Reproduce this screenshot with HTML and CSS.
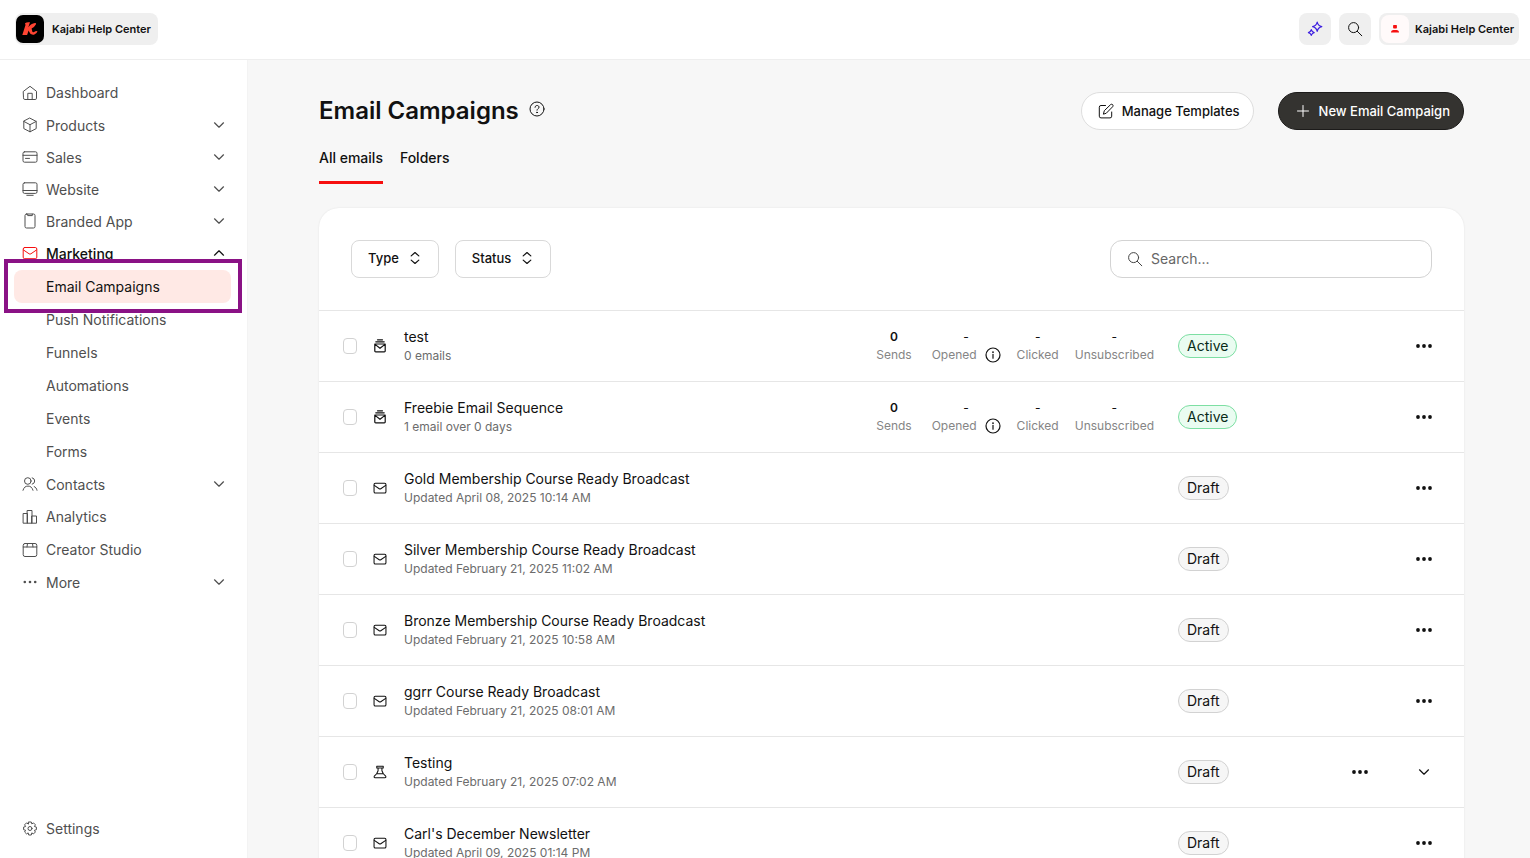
FILE: index.html
```html
<!DOCTYPE html>
<html lang="en">
<head>
<meta charset="utf-8">
<meta name="viewport" content="width=device-width, initial-scale=1">
<title>Email Campaigns</title>
<link rel="stylesheet" href="styles.css">
</head>
<body>
<svg class="sprite" aria-hidden="true">
  <symbol id="home" viewBox="0 0 16 16"><path d="M1.500 6.300 8 1.300l6.500 5v6.900a1.300 1.300 0 0 1-1.300 1.300H2.800a1.300 1.300 0 0 1-1.300-1.300zM5.800 14.500V8.300h4.400v6.200"/></symbol>
  <symbol id="cube" viewBox="0 0 16 16"><path d="M8 1.200 14.200 4.400v7.200L8 14.800 1.800 11.600V4.400zM1.800 4.400 8 7.700l6.200-3.300M8 7.700v7.100"/></symbol>
  <symbol id="card" viewBox="0 0 16 16"><rect x="1" y="2.800" width="14" height="10.400" rx="1.500"/><path d="M1 6.300h14M3.500 9.400h4"/></symbol>
  <symbol id="monitor" viewBox="0 0 16 16"><rect x="1" y="1.800" width="14" height="10.600" rx="1.500"/><path d="M1 9.500h14M4.800 14.300h6.400"/></symbol>
  <symbol id="phone" viewBox="0 0 16 16"><rect x="3" y="1" width="10" height="14" rx="1.500"/><path d="M5.700 1.200v1.400h4.600V1.200"/></symbol>
  <symbol id="mail" viewBox="0 0 16 16"><rect x="1.200" y="2.500" width="13.600" height="11.200" rx="1.500"/><path d="m1.500 5 5.600 3.800q.9.600 1.800 0L14.500 5"/></symbol>
  <symbol id="people" viewBox="0 0 16 16"><circle cx="5.800" cy="5" r="3.300"/><path d="M1 14.300c.8-3 2.600-4.200 5-4.200s4.200 1.200 5 4.200M10.200 1.800a3.300 3.300 0 0 1 0 6.400M12.200 10.600c1.500.6 2.400 1.800 2.800 3.700"/></symbol>
  <symbol id="bars" viewBox="0 0 16 16"><path d="M1.500 4.500h4v9.700h-4zM5.500 1.500h4.500v12.700H5.500zM10 7h4.500v7.200H10z"/></symbol>
  <symbol id="studio" viewBox="0 0 16 16"><rect x="1.200" y="1.500" width="13.600" height="13" rx="1.800"/><path d="M1.200 5h13.600M5.500 1.500 5 5M10.500 1.500l.5 3.500"/></symbol>
  <symbol id="dots" viewBox="0 0 16 16"><g fill="currentColor" stroke="none"><circle cx="2.800" cy="8" r="1.300"/><circle cx="8" cy="8" r="1.300"/><circle cx="13.200" cy="8" r="1.300"/></g></symbol>
  <symbol id="menu" viewBox="0 0 16 16"><g fill="currentColor" stroke="none"><circle cx="2" cy="8" r="1.900"/><circle cx="8" cy="8" r="1.900"/><circle cx="14" cy="8" r="1.900"/></g></symbol>
  <symbol id="gear" viewBox="0 0 16 16"><path d="m6.700 1h2.600l.5 1.900 1.700-1 1.900 1.900-1 1.700 2 .6v2.600l-2 .6 1 1.700-1.900 1.900-1.700-1-.5 2.100H6.700l-.5-2.100-1.700 1-1.900-1.900 1-1.700-2-.6V6.100l2-.6-1-1.700 1.900-1.900 1.700 1z"/><circle cx="8" cy="7.500" r="2"/></symbol>
  <symbol id="down" viewBox="0 0 12 12"><path d="m1.500 3.800 4.500 4.400 4.500-4.400"/></symbol>
  <symbol id="up" viewBox="0 0 12 12"><path d="m1.500 8.200 4.500-4.400 4.500 4.400"/></symbol>
  <symbol id="sort" viewBox="0 0 12 12"><path d="M2.200 3.900 6 .5l3.800 3.400M2.200 8.100 6 11.500l3.800-3.400"/></symbol>
  <symbol id="search" viewBox="0 0 16 16"><circle cx="6.600" cy="6.600" r="5"/><path d="m10.300 10.300 4.500 4.500"/></symbol>
  <symbol id="sparkle" viewBox="0 0 16 16"><path d="M10.200 1.200q.8 3.600 4.600 4.500-3.800.9-4.600 4.600Q9.400 6.600 5.600 5.700q3.800-.9 4.600-4.500zM4.300 8.700q.5 2.300 2.900 2.900-2.400.5-2.900 2.900-.5-2.400-2.900-2.900 2.400-.6 2.900-2.900z"/></symbol>
  <symbol id="help" viewBox="0 0 16 16"><circle cx="8" cy="8" r="7"/><path d="M6 6.300c0-2.500 4-2.400 4-.1C10 7.700 8 7.600 8 9.200"/><circle cx="8" cy="11.400" r=".4" fill="currentColor"/></symbol>
  <symbol id="info" viewBox="0 0 16 16"><circle cx="8" cy="8" r="7"/><path d="M8 7.400v3.800"/><circle cx="8" cy="5.200" r=".3" fill="currentColor"/></symbol>
  <symbol id="edit" viewBox="0 0 16 16"><path d="M7.500 2.500H3A1.700 1.700 0 0 0 1.300 4.200v9A1.700 1.700 0 0 0 3 14.900h9a1.700 1.700 0 0 0 1.700-1.700V9M5.500 10.800l.8-3.100 6.300-6.100c1.400-1.200 3.300.6 2.100 2.100L8.500 10z"/></symbol>
  <symbol id="plus" viewBox="0 0 16 16"><path d="M8 2.500v11M2.500 8h11"/></symbol>
  <symbol id="stack" viewBox="0 0 14 14"><path d="M4.500.8h5M2.800 2.800h8.400M1.800 5h10.400v6.900a.9.900 0 0 1-.9.900H2.700a.9.900 0 0 1-.9-.9zM2 5.400l5 3.900 5-3.900"/></symbol>
  <symbol id="flask" viewBox="0 0 16 16"><path d="M4.300 1.500h7.400v2H4.300zM5.800 3.500v3L4.200 10M10.200 3.500v3L11.800 10M4.200 10h7.600l2.700 2.800c.6.900.1 1.700-.8 1.700H2.300c-.9 0-1.400-.8-.8-1.700z"/></symbol>
</svg>

<div class="app">
  <header class="topbar">
    <button class="site-chip" type="button">
      <svg class="logo" viewBox="0 0 28 28" aria-hidden="true"><rect width="28" height="28" rx="7" fill="#000"/><path fill="#ff4533" d="M9 8.200q2-1.500 5-.9l-1.700 4.900q2.800-3.800 6.700-4.300 1.500 0 1 1.300-1.600 3-4.400 4.200l.7 3.200q.3 1 1.200.6l2.500-1.200 1.500.2q-.7 2.700-3.500 3.500-3.700.6-4.700-2.600l-.7-1.700-1.500 4.500H6.300l3.200-9.800z"/></svg>
      Kajabi Help Center
    </button>
    <div class="topbar-actions">
      <button class="square sparkle" type="button" aria-label="Assistant"><svg class="icon"><use href="#sparkle"/></svg></button>
      <button class="square" type="button" aria-label="Search"><svg class="icon"><use href="#search"/></svg></button>
      <button class="user-chip" type="button">
        <span class="avatar"><svg viewBox="0 0 10 10" aria-hidden="true"><path fill="#f60f0f" d="M3.600 1h2.800l.5.500v2.300l-.5.700H3.600l-.5-.7V1.500zM1 8.500Q1 6 3.500 6h3Q9 6 9 8.500z"/></svg></span>
        Kajabi Help Center
      </button>
    </div>
  </header>

  <nav class="sidebar" aria-label="Main">
    <ul class="nav">
      <li><a class="nav-item" href="#"><svg class="icon"><use href="#home"/></svg>Dashboard</a></li>
      <li><button class="nav-item group" type="button"><svg class="icon"><use href="#cube"/></svg>Products<svg class="caret"><use href="#down"/></svg></button></li>
      <li><button class="nav-item group" type="button"><svg class="icon"><use href="#card"/></svg>Sales<svg class="caret"><use href="#down"/></svg></button></li>
      <li><button class="nav-item group" type="button"><svg class="icon"><use href="#monitor"/></svg>Website<svg class="caret"><use href="#down"/></svg></button></li>
      <li><button class="nav-item group" type="button"><svg class="icon"><use href="#phone"/></svg>Branded App<svg class="caret"><use href="#down"/></svg></button></li>
      <li>
        <button class="nav-item group open" type="button" aria-expanded="true"><svg class="icon"><use href="#mail"/></svg>Marketing<svg class="caret"><use href="#up"/></svg></button>
        <ul class="subnav">
          <li class="current"><a href="#" aria-current="page">Email Campaigns</a></li>
          <li><a href="#">Push Notifications</a></li>
          <li><a href="#">Funnels</a></li>
          <li><a href="#">Automations</a></li>
          <li><a href="#">Events</a></li>
          <li><a href="#">Forms</a></li>
        </ul>
      </li>
      <li><button class="nav-item group" type="button"><svg class="icon"><use href="#people"/></svg>Contacts<svg class="caret"><use href="#down"/></svg></button></li>
      <li><a class="nav-item" href="#"><svg class="icon"><use href="#bars"/></svg>Analytics</a></li>
      <li><a class="nav-item" href="#"><svg class="icon"><use href="#studio"/></svg>Creator Studio</a></li>
      <li><button class="nav-item group" type="button"><svg class="icon"><use href="#dots"/></svg>More<svg class="caret"><use href="#down"/></svg></button></li>
    </ul>
    <a class="nav-item" href="#"><svg class="icon"><use href="#gear"/></svg>Settings</a>
  </nav>

  <main class="main">
    <div class="page-head">
      <h1>Email Campaigns</h1>
      <button class="help" type="button" aria-label="Help"><svg class="icon"><use href="#help"/></svg></button>
      <div class="page-actions">
        <button class="pill" type="button"><svg class="icon"><use href="#edit"/></svg>Manage Templates</button>
        <button class="pill primary" type="button"><svg class="icon"><use href="#plus"/></svg>New Email Campaign</button>
      </div>
    </div>
    <nav class="tabs" aria-label="Views">
      <a class="tab active" href="#" aria-current="page">All emails</a>
      <a class="tab" href="#">Folders</a>
    </nav>

    <section class="panel">
      <div class="toolbar">
        <button class="filter" type="button">Type<svg class="caret"><use href="#sort"/></svg></button>
        <button class="filter" type="button">Status<svg class="caret"><use href="#sort"/></svg></button>
        <label class="search"><svg class="icon"><use href="#search"/></svg><input type="search" placeholder="Search..." aria-label="Search emails"></label>
      </div>
      <ul class="campaigns">
        <li class="row">
          <input type="checkbox" aria-label="Select test">
          <svg class="icon kind"><use href="#stack"/></svg>
          <div class="summary"><a href="#">test</a><p>0 emails</p></div>
          <dl class="stats">
            <div><dt>Sends</dt><dd class="count">0</dd></div>
            <div><dt>Opened<svg class="icon"><use href="#info"/></svg></dt><dd>-</dd></div>
            <div><dt>Clicked</dt><dd>-</dd></div>
            <div><dt>Unsubscribed</dt><dd>-</dd></div>
          </dl>
          <div class="status"><span class="badge live">Active</span></div>
          <div class="actions"><button type="button" aria-label="Actions"><svg class="icon"><use href="#menu"/></svg></button></div>
        </li>
        <li class="row">
          <input type="checkbox" aria-label="Select Freebie Email Sequence">
          <svg class="icon kind"><use href="#stack"/></svg>
          <div class="summary"><a href="#">Freebie Email Sequence</a><p>1 email over 0 days</p></div>
          <dl class="stats">
            <div><dt>Sends</dt><dd class="count">0</dd></div>
            <div><dt>Opened<svg class="icon"><use href="#info"/></svg></dt><dd>-</dd></div>
            <div><dt>Clicked</dt><dd>-</dd></div>
            <div><dt>Unsubscribed</dt><dd>-</dd></div>
          </dl>
          <div class="status"><span class="badge live">Active</span></div>
          <div class="actions"><button type="button" aria-label="Actions"><svg class="icon"><use href="#menu"/></svg></button></div>
        </li>
        <li class="row">
          <input type="checkbox" aria-label="Select Gold Membership Course Ready Broadcast">
          <svg class="icon kind"><use href="#mail"/></svg>
          <div class="summary"><a href="#">Gold Membership Course Ready Broadcast</a><p>Updated April 08, 2025 10:14 AM</p></div>
          <div class="status"><span class="badge">Draft</span></div>
          <div class="actions"><button type="button" aria-label="Actions"><svg class="icon"><use href="#menu"/></svg></button></div>
        </li>
        <li class="row">
          <input type="checkbox" aria-label="Select Silver Membership Course Ready Broadcast">
          <svg class="icon kind"><use href="#mail"/></svg>
          <div class="summary"><a href="#">Silver Membership Course Ready Broadcast</a><p>Updated February 21, 2025 11:02 AM</p></div>
          <div class="status"><span class="badge">Draft</span></div>
          <div class="actions"><button type="button" aria-label="Actions"><svg class="icon"><use href="#menu"/></svg></button></div>
        </li>
        <li class="row">
          <input type="checkbox" aria-label="Select Bronze Membership Course Ready Broadcast">
          <svg class="icon kind"><use href="#mail"/></svg>
          <div class="summary"><a href="#">Bronze Membership Course Ready Broadcast</a><p>Updated February 21, 2025 10:58 AM</p></div>
          <div class="status"><span class="badge">Draft</span></div>
          <div class="actions"><button type="button" aria-label="Actions"><svg class="icon"><use href="#menu"/></svg></button></div>
        </li>
        <li class="row">
          <input type="checkbox" aria-label="Select ggrr Course Ready Broadcast">
          <svg class="icon kind"><use href="#mail"/></svg>
          <div class="summary"><a href="#">ggrr Course Ready Broadcast</a><p>Updated February 21, 2025 08:01 AM</p></div>
          <div class="status"><span class="badge">Draft</span></div>
          <div class="actions"><button type="button" aria-label="Actions"><svg class="icon"><use href="#menu"/></svg></button></div>
        </li>
        <li class="row">
          <input type="checkbox" aria-label="Select Testing">
          <svg class="icon kind"><use href="#flask"/></svg>
          <div class="summary"><a href="#">Testing</a><p>Updated February 21, 2025 07:02 AM</p></div>
          <div class="status"><span class="badge">Draft</span></div>
          <div class="actions"><button type="button" aria-label="Actions"><svg class="icon"><use href="#menu"/></svg></button><button type="button" aria-label="Expand"><svg class="caret"><use href="#down"/></svg></button></div>
        </li>
        <li class="row">
          <input type="checkbox" aria-label="Select Carl's December Newsletter">
          <svg class="icon kind"><use href="#mail"/></svg>
          <div class="summary"><a href="#">Carl's December Newsletter</a><p>Updated April 09, 2025 01:14 PM</p></div>
          <div class="status"><span class="badge">Draft</span></div>
          <div class="actions"><button type="button" aria-label="Actions"><svg class="icon"><use href="#menu"/></svg></button></div>
        </li>
      </ul>
    </section>
  </main>
</div>
</body>
</html>
```

FILE: styles.css
```css
*, *::before, *::after { box-sizing: border-box; }

body {
  margin: 0;
  font-family: Inter, "Liberation Sans", sans-serif;
  font-size: 14px;
  color: #111;
  background: #f7f7f7;
}

h1, p, ul, dl, dd { margin: 0; padding: 0; }
ul { list-style: none; }
a { color: inherit; text-decoration: none; }
button { font: inherit; color: inherit; background: none; border: 0; padding: 0; margin: 0; cursor: pointer; }

.sprite { display: none; }
.icon, .caret { flex: none; fill: none; stroke: currentColor; stroke-linecap: round; stroke-linejoin: round; }
.icon { width: 16px; height: 16px; }
.caret { width: 12px; height: 12px; stroke-width: 1.2; }

.app {
  display: grid;
  grid-template: auto minmax(0, 1fr) / 248px minmax(0, 1fr);
  height: 100vh;
}

/* Top bar */
.topbar {
  grid-column: 1 / -1;
  display: flex;
  align-items: center;
  justify-content: space-between;
  padding: 13px 11px 14px 15px;
  background: #fff;
  border-bottom: 1px solid #eee;
}
.topbar-actions { display: flex; gap: 8px; }
.site-chip, .user-chip {
  display: flex;
  align-items: center;
  gap: 8px;
  height: 32px;
  padding: 0 7px 0 1px;
  border-radius: 8px;
  background: #efefef;
  font-size: 11px;
  font-weight: 600;
}
.user-chip { padding: 0 5px 0 2px; gap: 6px; }
.logo { width: 28px; height: 28px; }
.avatar {
  display: grid;
  place-items: center;
  width: 28px;
  height: 28px;
  border-radius: 8px;
  background: #fffafa;
}
.avatar svg { width: 10px; height: 10px; }
.square {
  display: grid;
  place-items: center;
  width: 32px;
  height: 32px;
  border-radius: 8px;
  background: #efefef;
}
.sparkle { color: #3d1fe0; stroke-width: 1.2; }

/* Sidebar */
.sidebar {
  display: flex;
  flex-direction: column;
  justify-content: space-between;
  padding: 16px 15px 13px 14px;
  background: #fff;
  border-right: 1px solid #f3f3f3;
  color: #4f4f4f;
}
.nav-item {
  display: flex;
  align-items: center;
  gap: 8px;
  width: 100%;
  height: 33px;
  padding: 0 7px 0 8px;
}
.nav-item.group { height: 32px; }
.nav-item .caret { margin-left: auto; }
.nav-item.open { color: #111; font-weight: 500; }
.nav-item.open .icon { color: #f60f0f; }
.subnav { padding-top: 1px; }
.subnav a {
  display: flex;
  align-items: center;
  height: 33px;
  margin-right: 1px;
  padding-left: 32px;
  border-radius: 8px;
}
.subnav .current { position: relative; z-index: 1; }
.subnav .current a { position: relative; background: #ffe9e5; color: #111; }
.subnav .current::before {
  content: "";
  position: absolute;
  inset: -11px -10px -10px;
  background: #fff;
  border: 4px solid #8a1285;
}

/* Page */
.main {
  padding: 32px 66px 0 71px;
  overflow: auto;
  scrollbar-width: none;
}
.page-head { display: flex; align-items: center; gap: 10px; }
.page-head h1 { font-size: 24px; line-height: 32px; font-weight: 600; }
.help { display: flex; padding-bottom: 4px; }
.page-actions { display: flex; gap: 24px; margin-left: auto; }
.pill {
  display: flex;
  align-items: center;
  gap: 8px;
  height: 38px;
  padding: 0 13px 0 16px;
  border: 1px solid #dedede;
  border-radius: 19px;
  background: #fff;
  font-size: 13px;
  font-weight: 500;
}
.pill.primary { background: #343330; border-color: #1c1b1a; color: #fff; }

.tabs { display: flex; gap: 17px; margin-top: 16px; }
.tab { padding: 3px 0 15px; line-height: 17px; font-weight: 500; border-bottom: 3px solid transparent; }
.tab.active { border-color: #f60f0f; }

.panel {
  margin-top: 24px;
  background: #fff;
  border-radius: 20px;
  box-shadow: 0 0 2px #00000018;
}
.toolbar { display: flex; align-items: center; gap: 16px; padding: 32px; }
.filter {
  display: flex;
  align-items: center;
  gap: 10px;
  height: 38px;
  padding: 0 17px 2px 16px;
  border: 1px solid #d9d9d9;
  border-radius: 8px;
  font-size: 13px;
  font-weight: 500;
}
.search {
  display: flex;
  align-items: center;
  gap: 8px;
  width: 322px;
  height: 38px;
  margin-left: auto;
  padding: 0 16px 1px;
  border: 1px solid #d3d3d3;
  border-radius: 12px;
  color: #444;
}
.search input { flex: 1; min-width: 0; padding: 0; border: 0; outline: 0; background: none; font: inherit; }
.search input::placeholder { color: #666; opacity: 1; }

.row {
  display: flex;
  align-items: center;
  min-height: 71px;
  padding: 0 32px 0 24px;
  border-top: 1px solid #e6e6e6;
}
.row input {
  appearance: none;
  flex: none;
  width: 14px;
  height: 16px;
  margin: 0;
  border: 1px solid #d2d2d2;
  border-radius: 4px;
  background: #fff;
}
.kind { width: 14px; height: 14px; margin: 0 17px 0 16px; stroke-width: 1.2; }
.summary { flex: 1; min-width: 0; padding-bottom: 2px; }
.summary a { display: block; line-height: 20px; }
.summary p { font-size: 12px; line-height: 17px; color: #6c6c6c; }

.stats { display: flex; gap: 16px; margin-right: 24px; font-size: 12px; line-height: 18px; text-align: center; }
.stats div { display: flex; flex-direction: column-reverse; }
.stats div:first-child { margin-right: 4px; }
.stats dt { display: flex; align-items: center; justify-content: center; gap: 8px; color: #858585; }
.stats .icon { color: #111; stroke-width: 1.2; }
.count { font-weight: 600; }

.status { width: 164px; }
.badge {
  display: inline-flex;
  align-items: center;
  height: 24px;
  padding: 0 8px 1px;
  border: 1px solid #d2d2d2;
  border-radius: 12px;
  background: #f6f6f6;
}
.badge.live { background: #eafcf1; border-color: #7ddfa3; color: #082b18; }
.actions { display: flex; justify-content: flex-end; gap: 48px; width: 90px; }
.actions button { display: grid; place-items: center; width: 16px; height: 16px; }
```
